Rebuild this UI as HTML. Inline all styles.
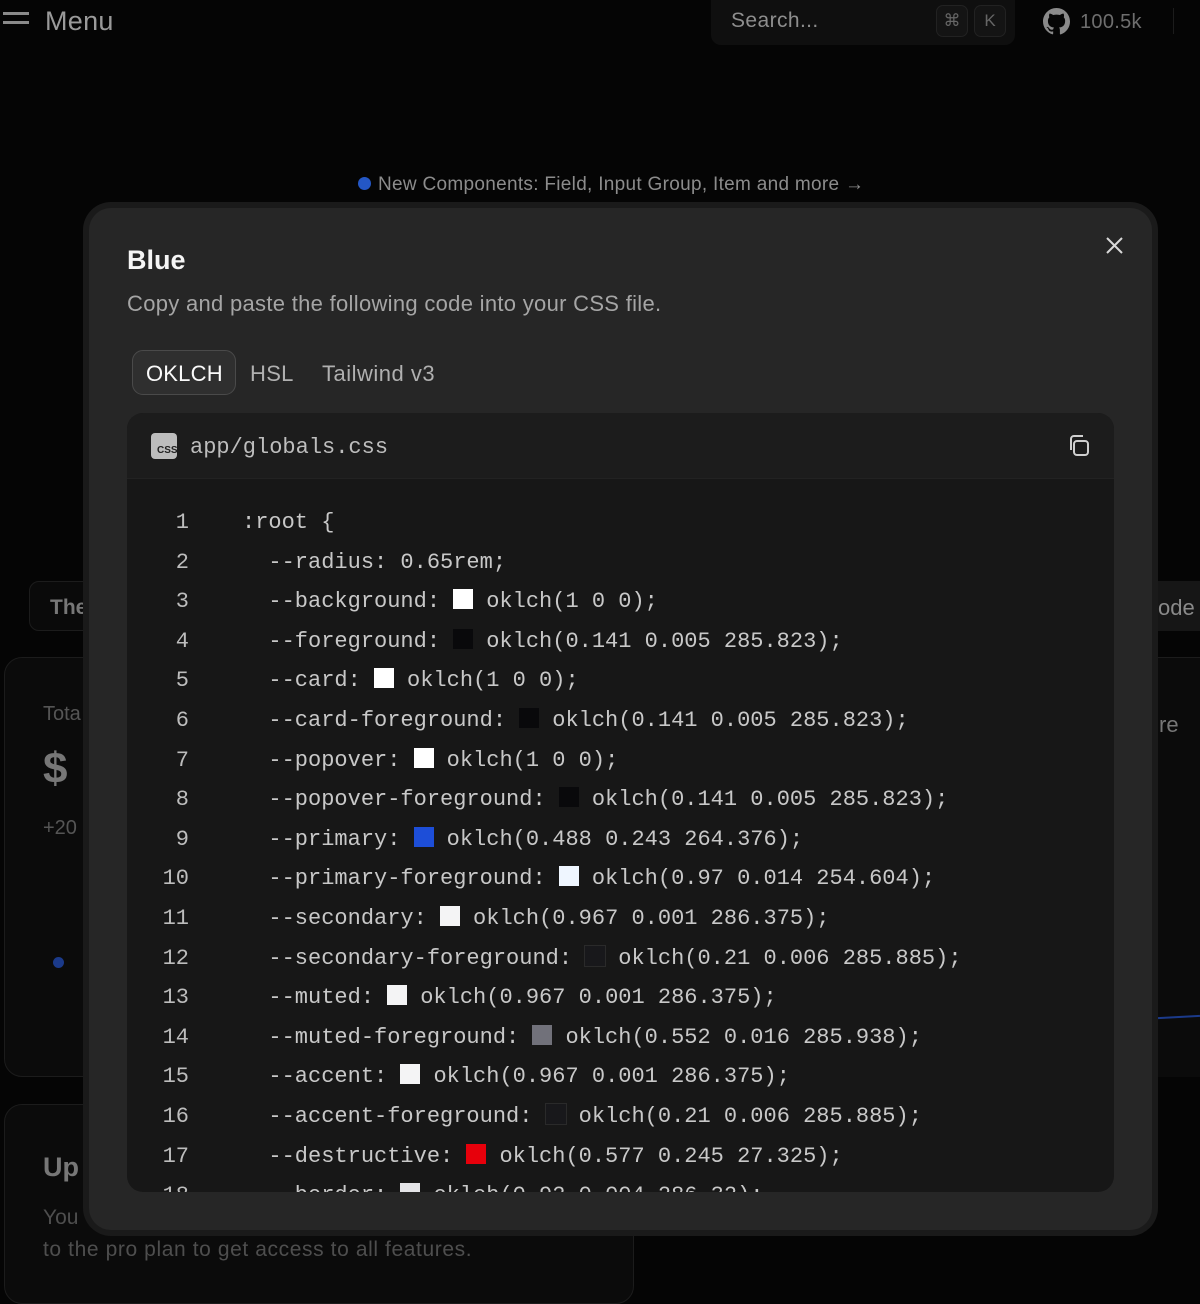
<!DOCTYPE html>
<html><head><meta charset="utf-8"><style>
*{box-sizing:border-box;margin:0;padding:0}
body{width:1200px;height:1262px;background:#050505;font-family:"Liberation Sans",sans-serif;position:relative;overflow:hidden;color:#ddd}
.abs{position:absolute}
.mono{font-family:"Liberation Mono",monospace}
.sw{display:inline-block;width:20px;height:20px;vertical-align:-2px;margin-right:13px}
.line{height:39.6px;line-height:39.6px;white-space:pre;font-size:22px;color:#c8c8c8}
.ln{display:inline-block;width:62px;text-align:right;color:#bdbdbd;margin-right:53px}
</style></head><body>
<!-- header -->
<div class="abs" style="left:3px;top:12px;width:26px;height:3px;background:#8a8a8a"></div>
<div class="abs" style="left:3px;top:21px;width:26px;height:3px;background:#8a8a8a"></div>
<div class="abs" style="left:45px;top:6px;font-size:27px;color:#9a9a9a;letter-spacing:0.3px">Menu</div>
<div class="abs" style="left:711px;top:0;width:304px;height:45px;background:#0f0f0f;border-radius:0 0 10px 10px"></div>
<div class="abs" style="left:731px;top:9px;font-size:21px;color:#8e8e8e;letter-spacing:0.4px">Search...</div>
<div class="abs" style="left:936px;top:5px;width:32px;height:32px;border:1px solid #222;background:#141414;border-radius:7px;color:#666;font-size:17px;text-align:center;line-height:30px">⌘</div>
<div class="abs" style="left:974px;top:5px;width:32px;height:32px;border:1px solid #222;background:#141414;border-radius:7px;color:#666;font-size:17px;text-align:center;line-height:30px">K</div>
<svg class="abs" style="left:1043px;top:8px" width="27" height="27" viewBox="0 0 16 16"><path fill="#8a8a8a" d="M8 0C3.58 0 0 3.58 0 8c0 3.540 2.290 6.530 5.470 7.590.4.07.55-.17.55-.38v-1.330c-2.230.48-2.700-1.070-2.700-1.070-.36-.92-.89-1.170-.89-1.170-.73-.5.06-.49.06-.49.8.06 1.230.83 1.230.83.72 1.220 1.870.87 2.330.66.07-.52.28-.87.51-1.070-1.780-.2-3.640-.89-3.640-3.950 0-.87.31-1.590.82-2.150-.08-.2-.36-1.020.08-2.120 0 0 .67-.21 2.200.82a7.600 7.600 0 014 0c1.530-1.040 2.200-.82 2.200-.82.44 1.100.16 1.920.08 2.120.51.56.82 1.270.82 2.150 0 3.070-1.870 3.750-3.650 3.950.29.25.54.73.54 1.480v2.200c0 .21.15.46.55.38A8.010 8.010 0 0016 8c0-4.420-3.580-8-8-8z"/></svg>
<div class="abs" style="left:1080px;top:11px;font-size:20px;color:#6e6e6e;letter-spacing:0.3px">100.5k</div>
<div class="abs" style="left:1173px;top:8px;width:1px;height:26px;background:#1c1c1c"></div>
<!-- banner -->
<div class="abs" style="left:358px;top:177px;width:13px;height:13px;border-radius:50%;background:#2457c5"></div>
<div class="abs" style="left:378px;top:174px;font-size:19px;color:#8c8c8c;letter-spacing:0.3px">New Components: Field, Input Group, Item and more →</div>
<!-- background cards -->
<div class="abs" style="left:29px;top:581px;width:120px;height:50px;border:1px solid #1c1c1c;border-radius:10px;background:#0a0a0a"></div>
<div class="abs" style="left:50px;top:596px;font-size:21px;color:#777;font-weight:bold">The</div>
<div class="abs" style="left:4px;top:657px;width:200px;height:420px;border:1px solid #1c1c1c;border-radius:18px;background:#0b0b0b"></div>
<div class="abs" style="left:43px;top:703px;font-size:20px;color:#555">Tota</div>
<div class="abs" style="left:43px;top:744px;font-size:44px;color:#777;font-weight:bold">$</div>
<div class="abs" style="left:43px;top:817px;font-size:20px;color:#555">+20</div>
<div class="abs" style="left:53px;top:957px;width:11px;height:11px;border-radius:50%;background:#1b3a8a"></div>
<div class="abs" style="left:4px;top:1104px;width:630px;height:200px;border:1px solid #1c1c1c;border-radius:18px;background:#0b0b0b"></div>
<div class="abs" style="left:43px;top:1152px;font-size:27px;color:#777;font-weight:bold">Up</div>
<div class="abs" style="left:43px;top:1206px;font-size:21px;color:#4e4e4e">You</div>
<div class="abs" style="left:43px;top:1238px;font-size:21px;color:#4e4e4e;letter-spacing:0.6px">to the pro plan to get access to all features.</div>
<div class="abs" style="left:1140px;top:581px;width:70px;height:50px;background:#161616"></div>
<div class="abs" style="left:1158px;top:595px;font-size:22px;color:#8a8a8a">ode</div>
<div class="abs" style="left:1140px;top:657px;width:70px;height:420px;background:#0b0b0b;border-top:1px solid #1c1c1c"></div>
<div class="abs" style="left:1159px;top:712px;font-size:22px;color:#777">re</div>
<div class="abs" style="left:1158px;top:1016px;width:42px;height:2px;background:#1b3a8a;transform:rotate(-3deg)"></div>
<!-- modal -->
<div class="abs" style="left:83px;top:202px;width:1075px;height:1034px;background:#1a1a1a;border-radius:28px"></div>
<div class="abs" style="left:89px;top:208px;width:1063px;height:1022px;background:#262626;border-radius:22px"></div>
<div class="abs" style="left:127px;top:245px;font-size:27px;font-weight:bold;color:#f5f5f5">Blue</div>
<div class="abs" style="left:127px;top:291px;font-size:22px;color:#a5a5a5;letter-spacing:0.3px">Copy and paste the following code into your CSS file.</div>
<svg class="abs" style="left:1105px;top:236px" width="19" height="19" viewBox="0 0 19 19"><path d="M2 2L17 17M17 2L2 17" stroke="#d8d8d8" stroke-width="2"/></svg>
<div class="abs" style="left:132px;top:350px;width:104px;height:45px;border:1px solid #4a4a4a;background:#2f2f2f;border-radius:11px"></div>
<div class="abs" style="left:146px;top:361px;font-size:22px;color:#fafafa;letter-spacing:0.2px">OKLCH</div>
<div class="abs" style="left:250px;top:361px;font-size:22px;color:#b0b0b0;letter-spacing:0.3px">HSL</div>
<div class="abs" style="left:322px;top:361px;font-size:22px;color:#b0b0b0;letter-spacing:0.5px">Tailwind v3</div>
<div class="abs" style="left:127px;top:413px;width:987px;height:779px;background:#171717;border-radius:16px;overflow:hidden">
  <div style="height:66px;background:#1c1c1c;border-bottom:1px solid #222"></div>
  <div class="abs" style="left:24px;top:20px;width:26px;height:26px;background:#bdbdbd;border-radius:4px;font-size:10px;color:#222;font-family:'Liberation Sans Narrow','Liberation Sans',sans-serif;font-weight:bold;padding-top:12px;padding-left:6px;line-height:12px">CSS</div>
  <div class="abs mono" style="left:63px;top:22px;font-size:22px;color:#bdbdbd">app/globals.css</div>
  <svg class="abs" style="left:941px;top:21px" width="22" height="23" viewBox="0 0 22 23"><rect x="6" y="7" width="14" height="14" rx="3" fill="none" stroke="#cfcfcf" stroke-width="2"/><path d="M3 16V5a3 3 0 013-3h9" fill="none" stroke="#cfcfcf" stroke-width="2"/></svg>
  <div class="abs mono" style="left:0;top:90px;width:987px">
<div class="line"><span class="ln">1</span>:root {</div>
<div class="line"><span class="ln">2</span>  --radius: 0.65rem;</div>
<div class="line"><span class="ln">3</span>  --background: <span class="sw" style="background:#fff"></span>oklch(1 0 0);</div>
<div class="line"><span class="ln">4</span>  --foreground: <span class="sw" style="background:#09090b"></span>oklch(0.141 0.005 285.823);</div>
<div class="line"><span class="ln">5</span>  --card: <span class="sw" style="background:#fff"></span>oklch(1 0 0);</div>
<div class="line"><span class="ln">6</span>  --card-foreground: <span class="sw" style="background:#09090b"></span>oklch(0.141 0.005 285.823);</div>
<div class="line"><span class="ln">7</span>  --popover: <span class="sw" style="background:#fff"></span>oklch(1 0 0);</div>
<div class="line"><span class="ln">8</span>  --popover-foreground: <span class="sw" style="background:#09090b"></span>oklch(0.141 0.005 285.823);</div>
<div class="line"><span class="ln">9</span>  --primary: <span class="sw" style="background:#1d4ed8"></span>oklch(0.488 0.243 264.376);</div>
<div class="line"><span class="ln">10</span>  --primary-foreground: <span class="sw" style="background:#eff6ff"></span>oklch(0.97 0.014 254.604);</div>
<div class="line"><span class="ln">11</span>  --secondary: <span class="sw" style="background:#f4f4f5"></span>oklch(0.967 0.001 286.375);</div>
<div class="line"><span class="ln">12</span>  --secondary-foreground: <span class="sw" style="background:#18181b;outline:1px solid #2a2a2a"></span>oklch(0.21 0.006 285.885);</div>
<div class="line"><span class="ln">13</span>  --muted: <span class="sw" style="background:#f4f4f5"></span>oklch(0.967 0.001 286.375);</div>
<div class="line"><span class="ln">14</span>  --muted-foreground: <span class="sw" style="background:#71717a"></span>oklch(0.552 0.016 285.938);</div>
<div class="line"><span class="ln">15</span>  --accent: <span class="sw" style="background:#f4f4f5"></span>oklch(0.967 0.001 286.375);</div>
<div class="line"><span class="ln">16</span>  --accent-foreground: <span class="sw" style="background:#18181b;outline:1px solid #2a2a2a"></span>oklch(0.21 0.006 285.885);</div>
<div class="line"><span class="ln">17</span>  --destructive: <span class="sw" style="background:#e7000b"></span>oklch(0.577 0.245 27.325);</div>
<div class="line"><span class="ln">18</span>  --border: <span class="sw" style="background:#e4e4e7"></span>oklch(0.92 0.004 286.32);</div>
  </div>
</div>
</body></html>
